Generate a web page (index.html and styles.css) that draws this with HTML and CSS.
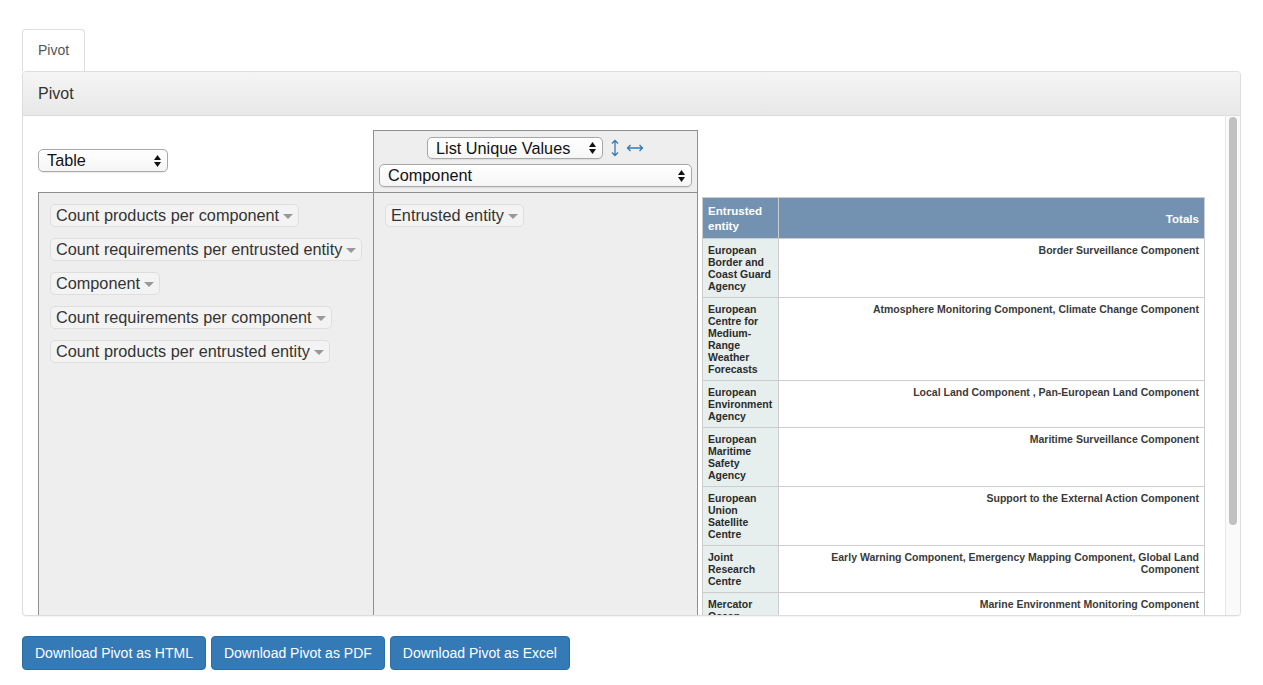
FILE: index.html
```html
<!DOCTYPE html>
<html lang="en">
<head>
<meta charset="utf-8">
<title>Pivot</title>
<link rel="stylesheet" href="styles.css">
</head>
<body>
<div class="page">
  <ul class="tabs">
    <li class="tab active">Pivot</li>
  </ul>
  <div class="panel">
    <div class="panel-heading">Pivot</div>
    <div class="panel-body">
      <div class="scroll-content">
        <div class="pvt-ui">
          <div class="renderer-cell">
            <div class="select select-renderer">
              <span>Table</span>
              <svg class="updown" width="7" height="12" viewBox="0 0 7 12"><polygon points="0,5 3.5,0 7,5"/><polygon points="0,7 3.5,12 7,7"/></svg>
            </div>
          </div>
          <div class="aggregator-cell">
            <div class="agg-top">
              <div class="select select-agg">
                <span>List Unique Values</span>
                <svg class="updown" width="7" height="12" viewBox="0 0 7 12"><polygon points="0,5 3.5,0 7,5"/><polygon points="0,7 3.5,12 7,7"/></svg>
              </div>
              <a class="order order-row" href="#" aria-label="row order">
                <svg width="8" height="18" viewBox="0 0 8 18"><path d="M4 1.5V16.5M1 4.5L4 1.5L7 4.5M1 13.5L4 16.5L7 13.5" fill="none" stroke="currentColor" stroke-width="1.3"/></svg>
              </a>
              <a class="order order-col" href="#" aria-label="column order">
                <svg width="18" height="8" viewBox="0 0 18 8"><path d="M1.5 4H16.5M4.5 1L1.5 4L4.5 7M13.5 1L16.5 4L13.5 7" fill="none" stroke="currentColor" stroke-width="1.3"/></svg>
              </a>
            </div>
            <div class="select select-attr">
              <span>Component</span>
              <svg class="updown" width="7" height="12" viewBox="0 0 7 12"><polygon points="0,5 3.5,0 7,5"/><polygon points="0,7 3.5,12 7,7"/></svg>
            </div>
          </div>
          <div class="cols-cell"></div>
          <div class="axis axis-unused">
            <ul class="attr-list">
              <li><span class="attr">Count products per component<svg class="tri" width="10" height="5" viewBox="0 0 10 5"><polygon points="0,0 10,0 5,5"/></svg></span></li>
              <li><span class="attr">Count requirements per entrusted entity<svg class="tri" width="10" height="5" viewBox="0 0 10 5"><polygon points="0,0 10,0 5,5"/></svg></span></li>
              <li><span class="attr">Component<svg class="tri" width="10" height="5" viewBox="0 0 10 5"><polygon points="0,0 10,0 5,5"/></svg></span></li>
              <li><span class="attr">Count requirements per component<svg class="tri" width="10" height="5" viewBox="0 0 10 5"><polygon points="0,0 10,0 5,5"/></svg></span></li>
              <li><span class="attr">Count products per entrusted entity<svg class="tri" width="10" height="5" viewBox="0 0 10 5"><polygon points="0,0 10,0 5,5"/></svg></span></li>
            </ul>
          </div>
          <div class="axis axis-rows">
            <ul class="attr-list">
              <li><span class="attr">Entrusted entity<svg class="tri" width="10" height="5" viewBox="0 0 10 5"><polygon points="0,0 10,0 5,5"/></svg></span></li>
            </ul>
          </div>
          <div class="renderer-area">
            <table class="pvt-table">
              <thead>
                <tr><th class="axis-label">Entrusted entity</th><th class="total-label">Totals</th></tr>
              </thead>
              <tbody>
                <tr><th>European Border and Coast Guard Agency</th><td>Border Surveillance Component</td></tr>
                <tr><th>European Centre for Medium-Range Weather Forecasts</th><td>Atmosphere Monitoring Component, Climate Change Component</td></tr>
                <tr><th>European Environment Agency</th><td>Local Land Component , Pan-European Land Component</td></tr>
                <tr><th>European Maritime Safety Agency</th><td>Maritime Surveillance Component</td></tr>
                <tr><th>European Union Satellite Centre</th><td>Support to the External Action Component</td></tr>
                <tr><th>Joint Research Centre</th><td>Early Warning Component, Emergency Mapping Component, Global Land Component</td></tr>
                <tr><th>Mercator Ocean International</th><td>Marine Environment Monitoring Component</td></tr>
                <tr><th>Totals</th><td>Atmosphere Monitoring Component, Border Surveillance Component, Climate Change Component, Early Warning Component, Emergency Mapping Component, Global Land Component, Local Land Component , Marine Environment Monitoring Component, Maritime Surveillance Component, Pan-European Land Component, Support to the External Action Component</td></tr>
              </tbody>
            </table>
          </div>
        </div>
      </div>
      <div class="scrollbar" aria-hidden="true">
        <div class="scroll-thumb"></div>
      </div>
    </div>
  </div>
  <div class="actions">
    <button class="btn" type="button">Download Pivot as HTML</button>
    <button class="btn" type="button">Download Pivot as PDF</button>
    <button class="btn" type="button">Download Pivot as Excel</button>
  </div>
</div>
</body>
</html>
```

FILE: styles.css
```css
* { box-sizing: border-box; }

html, body {
  margin: 0;
  padding: 0;
  background: #fff;
}

body {
  font-family: "Liberation Sans", Arial, Helvetica, sans-serif;
  font-size: 14px;
  color: #333;
}

.page {
  padding: 29px 22px 0 22px;
}

/* tabs */
.tabs {
  list-style: none;
  margin: 0;
  padding: 0;
  display: flex;
}

.tab {
  border: 1px solid #ddd;
  border-bottom: 0;
  border-radius: 4px 4px 0 0;
  padding: 10px 15px 11px;
  line-height: 20px;
  font-size: 14px;
  color: #555;
  background: #fff;
}

/* panel */
.panel {
  border: 1px solid #ddd;
  border-radius: 4px;
  background: #fff;
  box-shadow: 0 1px 1px rgba(0, 0, 0, 0.05);
  overflow: hidden;
}

.panel-heading {
  height: 44px;
  display: flex;
  align-items: center;
  padding: 0 15px;
  font-size: 16px;
  color: #333;
  background: linear-gradient(to bottom, #f5f5f5 0%, #e8e8e8 100%);
  border-bottom: 1px solid #ddd;
}

.panel-body {
  height: 499px;
  display: flex;
  overflow: hidden;
}

.scroll-content {
  flex: 1;
  min-width: 0;
  overflow: hidden;
  padding: 14px 15px 15px 15px;
}

.scrollbar {
  flex: none;
  width: 15px;
  background: #fafafa;
  border-left: 1px solid #e6e6e6;
  padding: 1px 0 0 3px;
}

.scroll-thumb {
  width: 8px;
  height: 408px;
  background: #c1c1c1;
  border-radius: 4px;
}

/* pivot ui */
.pvt-ui {
  display: grid;
  grid-template-columns: 335px 325px 1fr;
  grid-template-rows: 62px auto;
}

.renderer-cell {
  display: flex;
  align-items: center;
}

.aggregator-cell {
  border: 1px solid #8f8f8f;
  border-bottom: 0;
  background: #eeeeee;
  padding: 6px 5px 0 5px;
  display: flex;
  flex-direction: column;
  gap: 5px;
}

.agg-top {
  display: flex;
  justify-content: center;
  align-items: center;
  gap: 7px;
}

.order {
  color: #337ab7;
  display: flex;
  align-items: center;
}

.order-row { margin-left: 1px; }

.select {
  display: flex;
  align-items: center;
  justify-content: space-between;
  height: 23px;
  padding: 0 6px 0 8px;
  border: 1px solid #a8a8a8;
  border-radius: 5px;
  background: linear-gradient(to bottom, #ffffff 0%, #f6f6f6 100%);
  font-size: 16.25px;
  color: #111;
  box-shadow: 0 0.5px 1px rgba(0, 0, 0, 0.08);
}

.updown { fill: #111; flex: none; }

.select-renderer {
  width: 130px;
  margin-top: -1px;
}

.select-agg {
  width: 176px;
  height: 22px;
}

.select-attr {
  width: 100%;
}

.axis {
  background: #eeeeee;
  border: 1px solid #8f8f8f;
  padding: 11px 11px 40px 11px;
}

.axis-unused {
  border-right: 0;
}

.attr-list {
  list-style: none;
  margin: 0;
  padding: 0;
  display: flex;
  flex-direction: column;
  align-items: flex-start;
  gap: 11px;
}

.attr {
  display: inline-flex;
  align-items: center;
  background: #f3f3f3;
  border: 1px solid #dedede;
  border-radius: 5px;
  padding: 2px 5px;
  font-size: 16.25px;
  line-height: 17px;
  color: #333;
  white-space: nowrap;
}

.tri {
  fill: #999;
  margin-left: 4px;
  margin-top: 1px;
}

.renderer-area {
  padding: 5px 0 0 4px;
}

/* pivot table */
.pvt-table {
  border-collapse: collapse;
  width: 503px;
  font-family: "Liberation Sans", Arial, Helvetica, sans-serif;
}

.pvt-table th,
.pvt-table td {
  border: 1px solid #cdcdcd;
  padding: 5px;
  vertical-align: top;
}

.pvt-table thead th {
  background: #7391b0;
  border-color: #cdcdcd;
  color: #fff;
  font-weight: bold;
  font-size: 11.6px;
  line-height: 15px;
  vertical-align: middle;
}

.pvt-table thead .axis-label {
  text-align: left;
  width: 76px;
}

.pvt-table thead .total-label {
  text-align: right;
}

.pvt-table tbody th {
  background: #e6eeee;
  text-align: left;
  width: 76px;
  font-size: 10.5px;
  line-height: 12px;
  font-weight: bold;
  color: #2b2b2b;
}

.pvt-table tbody td {
  background: #fff;
  text-align: right;
  font-size: 10.5px;
  line-height: 12px;
  font-weight: bold;
  color: #3a3a3a;
}

/* buttons */
.actions {
  display: flex;
  gap: 5px;
  margin-top: 20px;
}

.btn {
  font-family: "Liberation Sans", Arial, Helvetica, sans-serif;
  font-size: 14px;
  line-height: 20px;
  padding: 6px 12px;
  color: #fff;
  background: #337ab7;
  border: 1px solid #2e6da4;
  border-radius: 4px;
  cursor: pointer;
}
```
